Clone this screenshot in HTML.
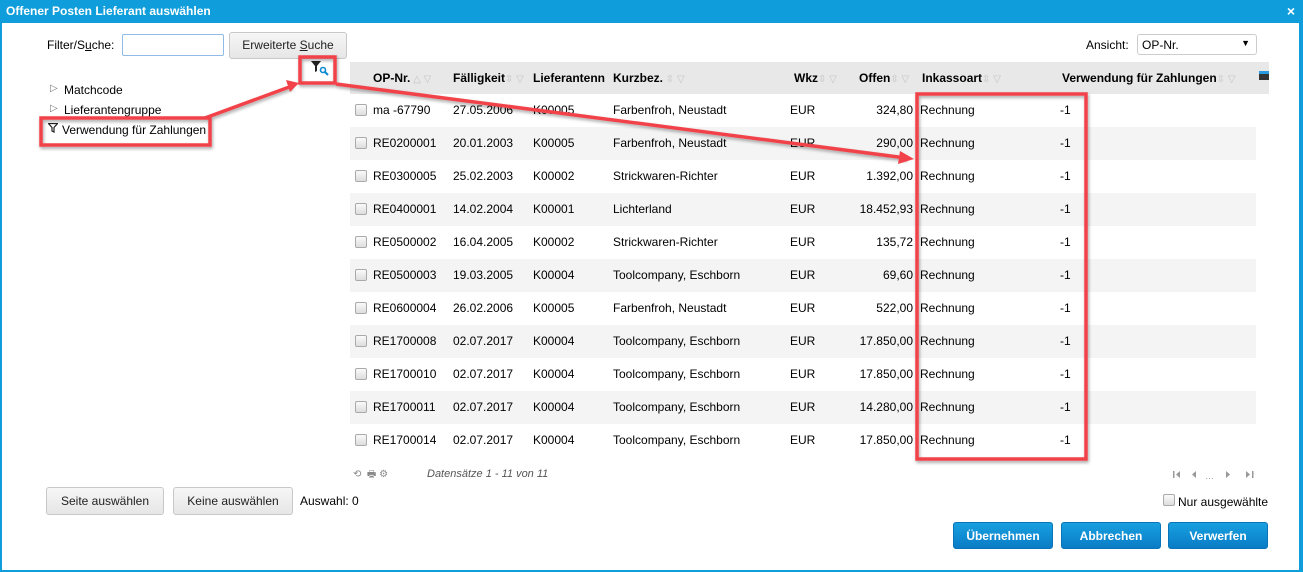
<!DOCTYPE html>
<html><head><meta charset="utf-8"><style>
*{box-sizing:border-box;margin:0;padding:0}
body{width:1303px;height:572px;overflow:hidden;background:#fff;font-family:"Liberation Sans",Arial,sans-serif;font-size:12px;color:#000;position:relative}
.a{position:absolute;white-space:nowrap}
.title{left:0;top:0;width:1303px;height:23px;background:#0f9edb;color:#fff;font-weight:bold;font-size:12px;line-height:23px;padding-left:6px}
.bl{left:0;top:23px;width:2px;height:549px;background:#0f9edb}
.br{left:1299px;top:23px;width:4px;height:549px;background:#0f9edb}
.bb{left:0;top:570px;width:1303px;height:2px;background:#0f9edb}
.btn{border:1px solid #c8c8c8;border-radius:3px;background:linear-gradient(#f6f6f6,#e6e6e6);text-align:center;color:#222}
.bbtn{border-radius:3px;background:linear-gradient(#17a0e0,#0a7cc6);color:#fff;font-weight:bold;text-align:center;line-height:27px;height:27px;border:1px solid #0a74b8}
.hd{left:350px;top:62px;width:919px;height:32px;background:#e8e8e8}
.th{font-weight:bold;top:71px}
.ar{color:#c4c4c4;font-weight:normal;font-size:10px}
.row{left:350px;width:906px;height:33px}
.cb{width:12px;height:12px;border:1px solid #aaa;border-radius:2px;background:linear-gradient(#fafafa,#ddd)}
</style></head><body>
<div class="a title">Offener Posten Lieferant auswählen</div>
<div class="a" style="right:8px;top:3px;color:#fff;font-weight:bold;font-size:14px">×</div>
<div class="a bl"></div><div class="a br"></div><div class="a bb"></div>

<div class="a" style="left:47px;top:38px">Filter/S<u>u</u>che:</div>
<div class="a" style="left:122px;top:34px;width:102px;height:22px;border:1px solid #8fbbe8;border-radius:2px"></div>
<div class="a btn" style="left:229px;top:32px;width:118px;height:27px;line-height:25px">Erweiterte <u>S</u>uche</div>
<div class="a" style="left:1086px;top:38px">Ansicht:</div>
<div class="a" style="left:1137px;top:34px;width:120px;height:21px;border:1px solid #ccc;border-radius:3px;padding:3px 4px">OP-Nr.<span style="position:absolute;right:6px;top:3px;font-size:9px">▼</span></div>

<div class="a" style="left:50px;top:83px;color:#777;font-size:10px">▷</div>
<div class="a" style="left:64px;top:83px">Matchcode</div>
<div class="a" style="left:50px;top:103px;color:#777;font-size:10px">▷</div>
<div class="a" style="left:64px;top:103px">Lieferantengruppe</div>
<svg class="a" style="left:48px;top:123px" width="10" height="10"><path d="M0.5 0.5h9l-3.5 4v4.5l-2 -1v-3.5z" fill="none" stroke="#222" stroke-width="1.2"/></svg>
<div class="a" style="left:62px;top:123px">Verwendung für Zahlungen</div>
<svg class="a" style="left:310px;top:60px" width="20" height="16"><path d="M1 1h10l-4 5v5l-2 1v-6z" fill="#222"/><circle cx="13" cy="10" r="2.5" fill="none" stroke="#0a8ad0" stroke-width="1.6"/><path d="M15 12l3 3" stroke="#0a8ad0" stroke-width="2"/></svg>

<div class="a hd"></div>
<div class="a th" style="left:373px">OP-Nr.<span class="ar"> △ ▽</span></div>
<div class="a th" style="left:453px">Fälligkeit<span class="ar">⇳ ▽</span></div>
<div class="a th" style="left:533px">Lieferantenn</div>
<div class="a th" style="left:613px">Kurzbez.<span class="ar"> ⇳ ▽</span></div>
<div class="a th" style="left:794px">Wkz<span class="ar">⇳ ▽</span></div>
<div class="a th" style="left:859px">Offen<span class="ar">⇳ ▽</span></div>
<div class="a th" style="left:922px">Inkassoart<span class="ar">⇳ ▽</span></div>
<div class="a th" style="left:1062px">Verwendung für Zahlungen<span class="ar">⇳ ▽</span></div>
<div class="a" style="left:1259px;top:71px;width:10px;height:9px;background:#333;border-top:3px solid #2a9ae0"></div>

<div id="rows"></div>
<script>
var d=[["ma -67790","27.05.2006","K00005","Farbenfroh, Neustadt","324,80"],["RE0200001","20.01.2003","K00005","Farbenfroh, Neustadt","290,00"],["RE0300005","25.02.2003","K00002","Strickwaren-Richter","1.392,00"],["RE0400001","14.02.2004","K00001","Lichterland","18.452,93"],["RE0500002","16.04.2005","K00002","Strickwaren-Richter","135,72"],["RE0500003","19.03.2005","K00004","Toolcompany, Eschborn","69,60"],["RE0600004","26.02.2006","K00005","Farbenfroh, Neustadt","522,00"],["RE1700008","02.07.2017","K00004","Toolcompany, Eschborn","17.850,00"],["RE1700010","02.07.2017","K00004","Toolcompany, Eschborn","17.850,00"],["RE1700011","02.07.2017","K00004","Toolcompany, Eschborn","14.280,00"],["RE1700014","02.07.2017","K00004","Toolcompany, Eschborn","17.850,00"]];
var h="";d.forEach(function(r,i){var y=94+33*i,t=y+9;
if(i%2)h+='<div class="a row" style="top:'+y+'px;background:#f4f4f4"></div>';
h+='<div class="a cb" style="left:355px;top:'+(y+10)+'px"></div>';
h+='<div class="a" style="left:373px;top:'+t+'px">'+r[0]+'</div><div class="a" style="left:453px;top:'+t+'px">'+r[1]+'</div><div class="a" style="left:533px;top:'+t+'px">'+r[2]+'</div><div class="a" style="left:613px;top:'+t+'px">'+r[3]+'</div><div class="a" style="left:790px;top:'+t+'px">EUR</div><div class="a" style="right:390px;top:'+t+'px">'+r[4]+'</div><div class="a" style="left:920px;top:'+t+'px">Rechnung</div><div class="a" style="left:1060px;top:'+t+'px">-1</div>';});
document.getElementById("rows").innerHTML=h;
</script>

<div class="a" style="left:353px;top:467px;color:#888;font-size:10px">⟲ &nbsp;🖶 ⚙</div>
<div class="a" style="left:427px;top:468px;color:#555;font-style:italic;font-size:11px">Datensätze 1 - 11 von 11</div>
<svg class="a" style="left:1172px;top:470px" width="84" height="10" fill="#999"><rect x="1" y="1" width="1.5" height="7"/><path d="M8 1v7l-4-3.5z"/><path d="M24 1v7l-4-3.5z"/><text x="33" y="9" font-size="9" font-family="Liberation Sans">…</text><path d="M54 1v7l4-3.5z"/><path d="M74 1v7l4-3.5z"/><rect x="80" y="1" width="1.5" height="7"/></svg>

<div class="a btn" style="left:46px;top:487px;width:118px;height:28px;line-height:26px">Seite auswählen</div>
<div class="a btn" style="left:173px;top:487px;width:120px;height:28px;line-height:26px">Keine auswählen</div>
<div class="a" style="left:300px;top:494px">Auswahl: 0</div>
<div class="a cb" style="left:1163px;top:494px"></div>
<div class="a" style="left:1178px;top:495px">Nur ausgewählte</div>
<div class="a bbtn" style="left:953px;top:522px;width:100px">Übernehmen</div>
<div class="a bbtn" style="left:1061px;top:522px;width:100px">Abbrechen</div>
<div class="a bbtn" style="left:1168px;top:522px;width:100px">Verwerfen</div>

<svg class="a" style="left:0;top:0" width="1303" height="572">
<defs><filter id="s"><feDropShadow dx="1" dy="2" stdDeviation="1.5" flood-opacity="0.35"/></filter></defs>
<g fill="none" stroke="#f2434a" stroke-width="3.5" filter="url(#s)">
<rect x="41" y="118" width="169" height="27"/>
<rect x="300" y="57" width="35" height="26"/>
<rect x="917" y="94" width="169" height="365"/>
<path d="M205 118L292 86"/>
<path d="M336 84L906 158"/>
</g>
<g fill="#f2434a">
<path d="M299 83L286 80L290 92z"/>
<path d="M914 159L900 151L898 164z"/>
</g>
</svg>
</body></html>
